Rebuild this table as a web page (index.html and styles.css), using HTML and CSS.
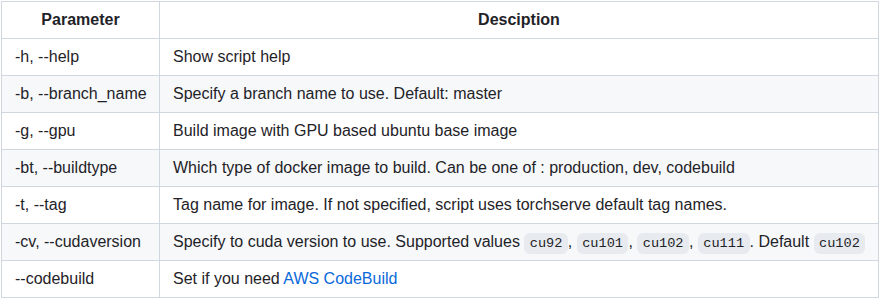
FILE: index.html
```html
<!DOCTYPE html>
<html lang="en">
<head>
  <meta charset="UTF-8" />
  <title>Build options</title>
  <link rel="stylesheet" href="styles.css">
</head>
<body>

<table class="params">
  <colgroup>
    <col class="col-param">
    <col>
  </colgroup>
  <thead>
    <tr>
      <th>Parameter</th>
      <th>Desciption</th>
    </tr>
  </thead>
  <tbody>
    <tr>
      <td>-h, --help</td>
      <td>Show script help</td>
    </tr>
    <tr>
      <td>-b, --branch_name</td>
      <td>Specify a branch name to use. Default: master</td>
    </tr>
    <tr>
      <td>-g, --gpu</td>
      <td>Build image with GPU based ubuntu base image</td>
    </tr>
    <tr>
      <td>-bt, --buildtype</td>
      <td>Which type of docker image to build. Can be one of : production, dev, codebuild</td>
    </tr>
    <tr>
      <td>-t, --tag</td>
      <td>Tag name for image. If not specified, script uses torchserve default tag names.</td>
    </tr>
    <tr>
      <td>-cv, --cudaversion</td>
      <td>Specify to cuda version to use. Supported values <code>cu92</code>, <code>cu101</code>, <code>cu102</code>, <code>cu111</code>. Default <code>cu102</code></td>
    </tr>
    <tr>
      <td>--codebuild</td>
      <td>Set if you need <a href="#">AWS CodeBuild</a></td>
    </tr>
  </tbody>
</table>

</body>
</html>
```

FILE: styles.css
```css
body {
  margin: 1px;
  font-family: "Liberation Sans", Arial, sans-serif;
  font-size: 16px;
  line-height: 1.5;
  color: #1f2328;
  background: #fff;
}

.params {
  border-collapse: collapse;
  border-spacing: 0;
  table-layout: fixed;
  width: 878px;
}

.col-param {
  width: 158px;
}

.params th,
.params td {
  padding: 6px 13px;
  border: 1px solid #d0d7de;
  white-space: nowrap;
}

.params th {
  font-weight: 600;
  text-align: center;
}

.params td {
  text-align: left;
}

.params tbody tr:nth-child(2n) {
  background-color: #f6f8fa;
}

.params code {
  font-family: "Liberation Mono", monospace;
  font-size: 85%;
  padding: 0.2em 0.4em;
  margin: 0;
  background-color: rgba(175, 184, 193, 0.2);
  border-radius: 6px;
}

.params a {
  color: #0969da;
  text-decoration: none;
}
```
